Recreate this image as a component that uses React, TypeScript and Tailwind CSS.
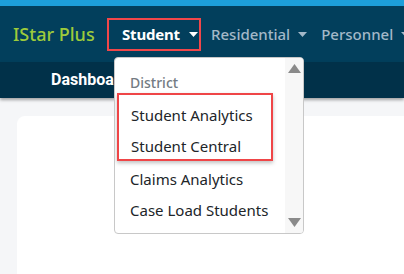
import React from 'react';

function Caret({ className }: { className: string }) {
  return (
    <svg className={className} width="9" height="5" viewBox="0 0 9 5">
      <path d="M0 0h9L4.5 5z" fill="currentColor" />
    </svg>
  );
}

export default function App() {
  return (
    <div className="relative w-[404px] h-[274px] overflow-hidden bg-[#f5f6f8] font-['Noto_Sans',sans-serif]">
      <div className="h-[6px] bg-[#1d9fda]" />
      <nav className="h-[56px] bg-[#023f5c] flex items-center pl-[13px] whitespace-nowrap">
        <span className="shrink-0 w-[84px] text-[18px] text-[#9dcb3b] font-medium">IStar Plus</span>
        <div className="shrink-0 ml-[10px] h-[33px] w-[94px] border-2 border-[#f0474a] flex items-center pl-[13px] gap-[9px]">
          <span className="text-[15px] font-bold text-white tracking-[-0.2px]">Student</span>
          <Caret className="text-white" />
        </div>
        <div className="shrink-0 ml-[10px] flex items-center gap-[8px] text-[#a3b8c8]">
          <span className="text-[15px] font-medium">Residential</span>
          <Caret className="text-[#a3b8c8]" />
        </div>
        <div className="shrink-0 ml-[14px] flex items-center gap-[8px] text-[#a3b8c8]">
          <span className="text-[15px] font-medium">Personnel</span>
          <Caret className="text-[#a3b8c8]" />
        </div>
      </nav>
      <div className="h-[36px] bg-[#013149] shadow-[0_2px_3px_rgba(0,0,0,0.35)] flex items-center pl-[51px]">
        <span className="text-[16px] font-bold text-white font-['Roboto',sans-serif]">Dashboard</span>
      </div>
      <div className="pl-[17px] pt-[18px] h-full">
        <div className="bg-white rounded-tl-[8px] h-full" />
      </div>

      <div className="absolute left-[114px] top-[57px] w-[190px] h-[177px] bg-white border border-[#c8c8c8] rounded-[4px] flex overflow-hidden">
        <div className="flex-1 pt-[13px] pl-[15px] whitespace-nowrap">
          <div className="text-[14px] font-medium text-[#737b83] h-[22px] flex items-center">District</div>
          <div className="-ml-[13px] w-[156px] h-[68px] border-2 border-[#ef4547] shadow-[0_2px_4px_rgba(0,0,0,0.25)]">
            <div className="pl-[12px] pt-[10px] text-[15px] text-[#212529] leading-[20px]">Student Analytics</div>
            <div className="pl-[12px] pt-[11px] text-[15px] text-[#212529] leading-[20px]">Student Central</div>
          </div>
          <div className="pt-[8px] text-[15px] text-[#212529] leading-[20px]">Claims Analytics</div>
          <div className="pt-[11px] text-[15px] text-[#212529] leading-[20px]">Case Load Students</div>
        </div>
        <div className="w-[18px] bg-[#f7f7f7] flex flex-col items-center justify-between py-[6px] text-[#8a8a8a]">
          <svg width="13" height="9" viewBox="0 0 13 9"><path d="M6.5 0L13 9H0z" fill="currentColor" /></svg>
          <svg width="13" height="9" viewBox="0 0 13 9"><path d="M0 0h13L6.5 9z" fill="currentColor" /></svg>
        </div>
      </div>
    </div>
  );
}
